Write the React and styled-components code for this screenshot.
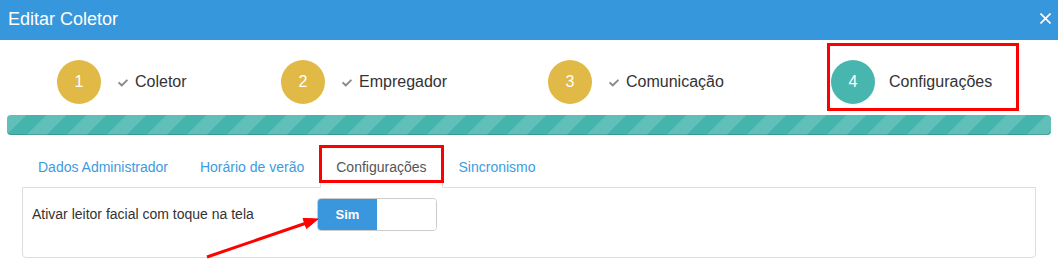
import React from "react";
import styled, { createGlobalStyle } from "styled-components";
import { FaCheck } from "react-icons/fa";

const GlobalStyle = createGlobalStyle`
  html, body {
    margin: 0;
    padding: 0;
    background: #fff;
  }
  body {
    font-family: "Liberation Sans", Arial, sans-serif;
    color: #333;
  }
  * {
    box-sizing: border-box;
  }
`;

const steps = [
  { n: 1, label: "Coletor", done: true },
  { n: 2, label: "Empregador", done: true },
  { n: 3, label: "Comunicação", done: true },
  { n: 4, label: "Configurações", done: false, marked: true },
];

const tabs = ["Dados Administrador", "Horário de verão", "Configurações", "Sincronismo"];

const App = () => {
  return (
    <>
      <GlobalStyle />
      <Modal>
        <Header>
          <Title>Editar Coletor</Title>
          <CloseBtn aria-label="Fechar">
            <svg width="11" height="11" viewBox="0 0 11 11">
              <path d="M0.5 0.5L10.5 10.5M10.5 0.5L0.5 10.5" stroke="#fff" strokeWidth="1.6" />
            </svg>
          </CloseBtn>
        </Header>

        <Body>
          <Steps>
            {steps.map((s) => (
              <Step key={s.n}>
                {s.marked && <StepMark />}
                <Circle current={!s.done}>{s.n}</Circle>
                {s.done && (
                  <CheckIcon>
                    <FaCheck size={10} />
                  </CheckIcon>
                )}
                <StepLabel>{s.label}</StepLabel>
              </Step>
            ))}
          </Steps>

          <Progress />

          <TabArea>
            <TabList>
              {tabs.map((t, i) => (
                <Tab key={t} active={i === 2}>
                  {i === 2 && <TabMark />}
                  {t}
                </Tab>
              ))}
            </TabList>
            <Panel>
              <FormRow>
                <FieldLabel>Ativar leitor facial com toque na tela</FieldLabel>
                <Switch>
                  <SwitchOn>Sim</SwitchOn>
                  <SwitchHandle />
                </Switch>
              </FormRow>
            </Panel>
          </TabArea>
        </Body>

        {/* seta vermelha apontando pro switch */}
        <Arrow width="130" height="52" viewBox="0 0 130 52">
          <line x1="7" y1="47" x2="105" y2="13.5" stroke="#f00" strokeWidth="3" />
          <polygon points="118,9 106.6,18.6 103,8.4" fill="#f00" stroke="#f00" strokeWidth="1" />
        </Arrow>
      </Modal>
    </>
  );
};

export default App;

const Modal = styled.div`
  position: relative;
  width: 1058px;
  height: 275px;
  background: #fff;
`;

const Header = styled.div`
  height: 40px;
  background-color: #3797dc;
  display: flex;
  align-items: center;
  justify-content: space-between;
  padding: 0 7px 2px 8px;
`;

const Title = styled.h4`
  margin: 0;
  font-size: 18px;
  font-weight: normal;
  line-height: 36px;
  color: #fff;
`;

const CloseBtn = styled.span`
  display: flex;
  width: 11px;
  height: 11px;
  margin-bottom: 2px;
`;

const Body = styled.div`
  padding: 20px 7px 0;
`;

const Steps = styled.div`
  display: grid;
  grid-template-columns: 224px 267px 283px 1fr;
  padding-left: 50px;
  height: 44px;
`;

const Step = styled.div`
  position: relative;
  display: flex;
  align-items: center;
  width: max-content;
`;

const StepMark = styled.div`
  position: absolute;
  left: -4px;
  top: -17px;
  right: -27px;
  bottom: -7px;
  border: 3px solid #f00;
  pointer-events: none;
`;

const Circle = styled.div`
  width: 44px;
  height: 44px;
  border-radius: 50%;
  background-color: ${(p) => (p.current ? "#47b6ae" : "#e0b946")};
  color: #fff;
  font-size: 16px;
  display: flex;
  align-items: center;
  justify-content: center;
  margin-right: 14px;
`;

const CheckIcon = styled.span`
  display: flex;
  color: #8c8c8c;
  margin: 2px 7px 0 3px;
`;

const StepLabel = styled.span`
  font-size: 16px;
  color: #333;
`;

const Progress = styled.div`
  margin-top: 11px;
  height: 20px;
  border-radius: 4px;
  background-color: #44b4ad;
  background-image: linear-gradient(
    135deg,
    rgba(255, 255, 255, 0.15) 25%,
    transparent 25%,
    transparent 50%,
    rgba(255, 255, 255, 0.15) 50%,
    rgba(255, 255, 255, 0.15) 75%,
    transparent 75%,
    transparent
  );
  background-size: 40px 40px;
  box-shadow: inset 0 -1px 0 rgba(0, 0, 0, 0.15);
`;

const TabArea = styled.div`
  margin: 11px 15px 0;
`;

const TabList = styled.div`
  display: flex;
  height: 42px;
`;

const Tab = styled.div`
  position: relative;
  padding: 10px 15px;
  line-height: 20px;
  font-size: 14px;
  border: 1px solid ${(p) => (p.active ? "#ddd" : "transparent")};
  border-bottom-color: ${(p) => (p.active ? "#fff" : "transparent")};
  border-radius: 4px 4px 0 0;
  background: ${(p) => (p.active ? "#fff" : "transparent")};
  color: ${(p) => (p.active ? "#555" : "#3c9be0")};
  z-index: ${(p) => (p.active ? 2 : 1)};
  white-space: nowrap;
`;

const TabMark = styled.div`
  position: absolute;
  left: -2px;
  top: -2px;
  right: -2px;
  bottom: 4px;
  border: 3px solid #f00;
  pointer-events: none;
`;

const Panel = styled.div`
  position: relative;
  margin-top: -1px;
  border: 1px solid #ddd;
  border-radius: 0 0 4px 4px;
  padding: 10px 9px 26px;
`;

const FormRow = styled.div`
  display: flex;
  align-items: center;
`;

const FieldLabel = styled.label`
  width: 285px;
  font-size: 14px;
  line-height: 33px;
  color: #333;
`;

const Switch = styled.div`
  display: flex;
  width: 120px;
  height: 33px;
  border: 1px solid #ccc;
  border-radius: 4px;
  overflow: hidden;
`;

const SwitchOn = styled.span`
  width: 59px;
  background-color: #3a97dd;
  color: #fff;
  font-size: 13px;
  font-weight: bold;
  display: flex;
  align-items: center;
  justify-content: center;
`;

const SwitchHandle = styled.span`
  flex: 1;
  background: #fff;
`;

const Arrow = styled.svg`
  position: absolute;
  left: 200px;
  top: 210px;
  overflow: visible;
  z-index: 5;
`;
